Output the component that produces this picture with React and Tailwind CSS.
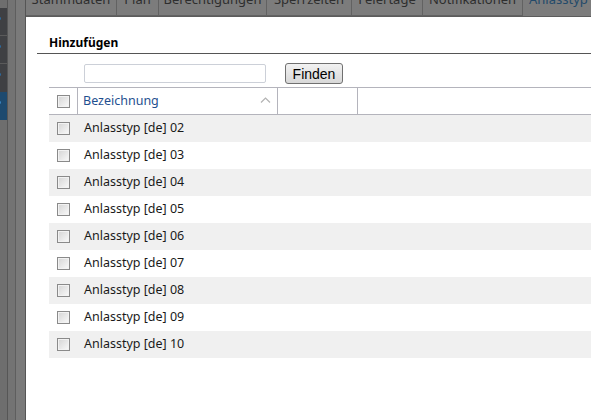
import React from 'react';

const tabs = [
  { label: 'Stammdaten', w: 'w-[91px]' },
  { label: 'Plan', w: 'w-[42px]' },
  { label: 'Berechtigungen', w: 'w-[108px]' },
  { label: 'Sperrzeiten', w: 'w-[85px]' },
  { label: 'Feiertage', w: 'w-[71px]' },
  { label: 'Notifikationen', w: 'w-[100px]' },
];

const rows = ['02', '03', '04', '05', '06', '07', '08', '09', '10'];

function Checkbox() {
  return (
    <span className="block w-[13px] h-[13px] border border-[#8a8a8a] bg-gradient-to-br from-[#d4d4d4] to-[#fafafa] shadow-[inset_0_0_0_1px_#f2f2f2]" />
  );
}

export default function App() {
  return (
    <div className="w-[591px] h-[420px] overflow-hidden flex bg-[#7b7b7b] font-['Noto_Sans',sans-serif]">
      {/* dimmed sidebar */}
      <div className="flex h-full">
        <div className="w-[7px] flex flex-col pt-[8px] bg-[#6e6e6e]">
          <div className="h-[28px] bg-[#3f4043] border-b border-[#5a5a5a] relative">
            <span className="absolute left-[-2px] top-[9px] w-[3px] h-[3px] rounded-full bg-[#2d6aa0]" />
          </div>
          <div className="h-[28px] bg-[#3f4043] border-b border-[#5a5a5a] relative">
            <span className="absolute left-[-2px] top-[9px] w-[3px] h-[3px] rounded-full bg-[#2d6aa0]" />
          </div>
          <div className="h-[28px] bg-[#3f4043] relative">
            <span className="absolute left-[-2px] top-[9px] w-[3px] h-[3px] rounded-full bg-[#2d6aa0]" />
          </div>
          <div className="h-[28px] bg-[#1d4a6f] relative">
            <span className="absolute left-[-2px] top-[9px] w-[3px] h-[3px] rounded-full bg-[#3a84c0]" />
          </div>
        </div>
        <div className="w-[1px] bg-[#565656]" />
        <div className="w-[7px] bg-[#737373]" />
        <div className="w-[1px] bg-[#5e5e5e]" />
        <div className="w-[9px] bg-[#7a7a7a]" />
        <div className="w-[1px] bg-[#555555]" />
      </div>

      <div className="flex-1 flex flex-col min-w-0">
        {/* dimmed tab bar */}
        <div className="h-[17px] flex flex-none border-b border-[#5c5c5c] bg-[#7c7c7c]">
          {tabs.map((t) => (
            <div
              key={t.label}
              className={`${t.w} flex-none h-[16px] border-r border-b border-[#626262] overflow-hidden flex justify-center`}
            >
              <span className="text-[13px] leading-[13px] mt-[-7px] text-[#2e2e2e] whitespace-nowrap">{t.label}</span>
            </div>
          ))}
          <div className="flex-1 h-[16px] overflow-hidden pl-[6px]">
            <span className="block text-[13px] leading-[13px] mt-[-7px] text-[#234a6a] whitespace-nowrap">Anlasstyp</span>
          </div>
        </div>

        {/* modal */}
        <div className="flex-1 bg-white pl-[11px]">
          <div className="h-[37px] border-b border-[#555555] flex items-end pl-[12px] pb-[3px]">
            <span className="text-[12px] font-bold text-black leading-[14px]">Hinzufügen</span>
          </div>

          <div className="flex items-start h-[33px] pt-[9px] pl-[47px]">
            <input
              type="text"
              className="mt-[1px] w-[182px] h-[19px] border border-[#ccd0d8] rounded-[2px] outline-none"
            />
            <button className="ml-[19px] w-[58px] h-[21px] border border-[#707070] rounded-[3px] bg-gradient-to-b from-[#f2f2f2] to-[#d8d8d8] text-[14px] leading-none text-black font-['Liberation_Sans',sans-serif]">
              Finden
            </button>
          </div>

          <div className="ml-[12px]">
            <div className="flex h-[28px] border-t border-b border-[#b4b4bc]">
              <div className="w-[29px] flex-none border-r border-[#b4b4bc] flex items-center pl-[8px]">
                <Checkbox />
              </div>
              <div className="w-[200px] flex-none border-r border-[#b4b4bc] flex items-center pl-[5px] pr-[6px]">
                <span className="text-[12.5px] text-[#1f4f8f] flex-1">Bezeichnung</span>
                <svg width="11" height="6" viewBox="0 0 11 6" className="mb-[2px]">
                  <path d="M1 5.5 L5.5 1 L10 5.5" fill="none" stroke="#b3b3b3" strokeWidth="1.2" />
                </svg>
              </div>
              <div className="w-[80px] flex-none border-r border-[#b4b4bc]" />
              <div className="flex-1" />
            </div>
            {rows.map((n, i) => (
              <div
                key={n}
                className={`flex items-center h-[27px] ${i % 2 === 0 ? 'bg-[#f0f0f0]' : 'bg-white'}`}
              >
                <div className="w-[29px] flex-none pl-[8px]">
                  <Checkbox />
                </div>
                <span className="pl-[6px] text-[12.5px] text-[#1a1a1a]">Anlasstyp [de] {n}</span>
              </div>
            ))}
          </div>
        </div>
      </div>
    </div>
  );
}
